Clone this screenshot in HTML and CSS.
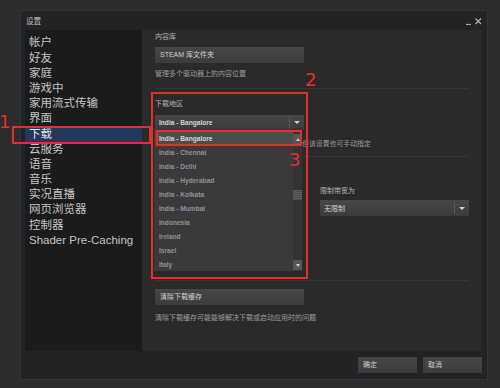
FILE: index.html
```html
<!DOCTYPE html>
<html lang="zh-CN">
<head>
<meta charset="utf-8">
<title>设置</title>
<link rel="stylesheet" href="styles.css">
</head>
<body>
<div class="window">
  <div class="titlebar">
    <span class="title">设置</span>
    <div class="controls">
      <svg width="16" height="8" viewBox="0 0 16 8"><path d="M0 7.5H5" stroke="#a8a8a8" stroke-width="1.2"/><path d="M9.5 1.5L15 7M15 1.5L9.5 7" stroke="#b0b0b0" stroke-width="1.2"/></svg>
    </div>
  </div>
  <div class="main">
    <nav class="sidebar">
      <div class="nav-item">帐户</div>
      <div class="nav-item">好友</div>
      <div class="nav-item">家庭</div>
      <div class="nav-item">游戏中</div>
      <div class="nav-item">家用流式传输</div>
      <div class="nav-item">界面</div>
      <div class="nav-item active">下载</div>
      <div class="nav-item">云服务</div>
      <div class="nav-item">语音</div>
      <div class="nav-item">音乐</div>
      <div class="nav-item">实况直播</div>
      <div class="nav-item">网页浏览器</div>
      <div class="nav-item">控制器</div>
      <div class="nav-item">Shader Pre-Caching</div>
    </nav>
    <section class="content">
      <div class="label">内容库</div>
      <div class="btn wide">STEAM 库文件夹</div>
      <div class="note">管理多个驱动器上的内容位置</div>
      <div class="rule"></div>

      <div class="label sec">下载地区</div>
      <div class="select region"><span class="sel-text">India - Bangalore</span><span class="sep"></span><span class="arrow"></span></div>
      <div class="note note-b">但该设置也可手动指定</div>
      <div class="rule r2"></div>

      <div class="limit">
        <div class="label">限制带宽为</div>
        <div class="select bw"><span class="sel-text">无限制</span><span class="sep"></span><span class="arrow"></span></div>
      </div>
      <div class="rule r3"></div>
      <div class="btn wide clear">清除下载缓存</div>
      <div class="note note-c">清除下载缓存可能能够解决下载或启动应用时的问题</div>

      <div class="dropdown-list">
        <div class="items">
          <div class="item hi">India - Bangalore</div>
          <div class="item">India - Chennai</div>
          <div class="item">India - Delhi</div>
          <div class="item">India - Hyderabad</div>
          <div class="item">India - Kolkata</div>
          <div class="item">India - Mumbai</div>
          <div class="item">Indonesia</div>
          <div class="item">Ireland</div>
          <div class="item">Israel</div>
          <div class="item">Italy</div>
        </div>
        <div class="scrollbar">
          <div class="sb-btn up"><span></span></div>
          <div class="sb-thumb"></div>
          <div class="sb-btn down"><span></span></div>
        </div>
      </div>
    </section>
  </div>
  <div class="footer">
    <div class="btn foot">确定</div>
    <div class="btn foot">取消</div>
  </div>
</div>

<div class="mark box1"></div>
<div class="mark box2"></div>
<div class="mark box3"></div>
<div class="num n1">1</div>
<div class="num n2">2</div>
<div class="num n3">3</div>
</body>
</html>
```

FILE: styles.css
```css
* { box-sizing: border-box; }
html, body { margin: 0; }
body {
  position: relative;
  width: 500px;
  height: 388px;
  overflow: hidden;
  background: #2c2c2c;
  padding: 10px 12px 8px 20px;
  font-family: "Liberation Sans", "Noto Sans CJK SC", sans-serif;
}
.window {
  width: 468px;
  height: 370px;
  background: #232323;
  border: 1px solid #2a3645;
  display: flex;
  flex-direction: column;
}
.titlebar {
  height: 19px;
  display: flex;
  align-items: center;
  justify-content: space-between;
  padding: 0 5px 0 5px;
}
.title { font-size: 7.5px; color: #c2c2c2; }
.controls { display: flex; align-items: center; height: 8px; }
.controls svg { display: block; }
.main {
  height: 321px;
  display: flex;
  padding: 0 5px 0 4px;
}
.sidebar {
  width: 117px;
  background: #1b1b1b;
  padding-top: 5.4px;
}
.nav-item {
  height: 15.2px;
  line-height: 15.2px;
  padding-left: 4px;
  font-size: 11.5px;
  color: #c6c6c6;
  white-space: nowrap;
}
.nav-item.active { background: #1f3a5a; color: #e2e2e2; }
.content {
  position: relative;
  flex: 1;
  background: #2a2a2a;
  padding: 2px 13px 0 13px;
}
.label { font-size: 7px; line-height: 9px; height: 9px; color: #b4b4b4; }
.label.sec { margin-top: 10px; }
.note { font-size: 7px; line-height: 9px; height: 9px; color: #9c9c9c; white-space: nowrap; margin-top: 6px; }
.note-b { margin-top: 9px; margin-left: 147px; font-size: 6.9px; }
.note-c { margin-top: 8px; }
.rule { height: 1px; background: #363636; margin-top: 10px; }
.r2 { margin-top: 8px; }
.r3 { margin-top: 64px; }
.btn {
  background: linear-gradient(#474747, #3c3c3c);
  color: #cfcfcf;
  font-size: 7px;
  height: 16px;
  line-height: 16px;
  padding-left: 5px;
  white-space: nowrap;
}
.btn.wide { width: 149px; margin-top: 6px; }
.btn.clear { margin-top: 8px; }
.select {
  display: flex;
  align-items: center;
  background: linear-gradient(#474747, #3b3b3b);
  padding-left: 4px;
}
.select.region { width: 149px; height: 15px; margin-top: 7px; }
.sel-text { flex: 1; font-size: 6.6px; font-weight: bold; color: #d4d4d4; white-space: nowrap; }
.sep { width: 1px; height: 11px; background: #5c5c5c; margin-right: 4px; }
.arrow {
  width: 0; height: 0;
  border-left: 3px solid transparent;
  border-right: 3px solid transparent;
  border-top: 3px solid #d0d0d0;
  margin-right: 4px;
}
.limit { margin-top: 29px; padding-left: 165px; }
.select.bw { width: 149px; height: 16px; margin-top: 5px; }
.select.bw .sel-text { font-weight: normal; font-size: 7px; }

.dropdown-list {
  position: absolute;
  left: 12px;
  top: 98px;
  width: 148px;
  height: 143px;
  background: #3a3a3a;
  display: flex;
}
.items { flex: 1; padding: 3px 0 0 1px; }
.item {
  height: 14px;
  line-height: 14px;
  padding-left: 4px;
  font-size: 6.6px;
  font-weight: bold;
  color: #8b939b;
  white-space: nowrap;
}
.item.hi { background: #4c4c4c; color: #d6d6d6; height: 15px; line-height: 15px; }
.scrollbar {
  width: 9px;
  background: #343434;
  padding-top: 6px;
  display: flex;
  flex-direction: column;
}
.sb-btn {
  width: 9px;
  height: 10px;
  background: #565656;
  display: flex;
  align-items: center;
  justify-content: center;
}
.sb-btn span {
  width: 0; height: 0;
  border-left: 2.5px solid transparent;
  border-right: 2.5px solid transparent;
}
.sb-btn.up span { border-bottom: 3px solid #cfcfcf; }
.sb-btn.down span { border-top: 3px solid #cfcfcf; }
.sb-thumb {
  width: 9px;
  height: 10px;
  margin-top: 46px;
  background: repeating-linear-gradient(#5c5c5c 0 1px, #4e4e4e 1px 2px);
}
.sb-btn.down { margin-top: 60px; }

.footer {
  height: 28px;
  display: flex;
  justify-content: flex-end;
  align-items: flex-start;
  gap: 6px;
  padding: 6px 5px 0 0;
}
.btn.foot { width: 59px; }

.mark {
  position: absolute;
  border: 2px solid #e4302d;
}
.box1 { left: 12px; top: 126px; width: 139px; height: 18px; }
.box2 { left: 151px; top: 92px; width: 157px; height: 187px; }
.box3 { left: 156px; top: 130px; width: 146px; height: 16px; }
.num {
  position: absolute;
  font-family: "DejaVu Sans", sans-serif;
  font-size: 18px;
  line-height: 18px;
  color: #e4302d;
}
.n1 { left: -1px; top: 113px; }
.n2 { left: 305px; top: 71px; }
.n3 { left: 289px; top: 151px; }
```
